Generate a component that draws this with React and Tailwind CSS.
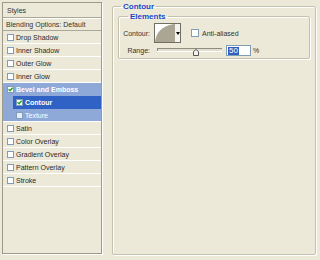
import React from 'react';

const FONT = "font-['Liberation_Sans',Arial,sans-serif]";

function Box({ checked, light }) {
  return (
    <span
      className={`flex h-[7px] w-[7px] shrink-0 items-center justify-center border border-[#7f9db9] ${
        light ? 'bg-[#e8edf8]' : 'bg-white'
      }`}
    >
      {checked && (
        <svg width="5" height="5" viewBox="0 0 5 5">
          <path d="M0.5 2.3 L2 3.8 L4.6 0.8" fill="none" stroke="#21a121" strokeWidth="1.4" />
        </svg>
      )}
    </span>
  );
}

function Row({ label }) {
  return (
    <div className="flex h-[13px] items-center gap-[2px] border-b border-white pl-[4px] text-[#2a2a2a]">
      <Box />
      <span>{label}</span>
    </div>
  );
}

export default function App() {
  const top = ['Drop Shadow', 'Inner Shadow', 'Outer Glow', 'Inner Glow'];
  const bottom = ['Satin', 'Color Overlay', 'Gradient Overlay', 'Pattern Overlay', 'Stroke'];

  return (
    <div className={`flex h-[260px] w-[320px] bg-[#ece9d8] text-[7px] leading-none ${FONT}`}>
      {/* style list */}
      <div className="ml-[2px] mt-[2px] flex h-[252px] w-[100px] flex-col border border-[#9d9a89] shadow-[1px_1px_0_#fff]">
        <div className="flex h-[15px] items-center border-b border-[#aca899] pl-[4px] text-[#333] shadow-[0_1px_0_#fff]">
          Styles
        </div>
        <div className="mt-[1px] flex h-[12px] items-center border-b border-[#aca899] pl-[3px] text-[#333]">
          Blending Options: Default
        </div>
        {top.map((t) => (
          <Row key={t} label={t} />
        ))}
        <div className="bg-[#8ea8d8] font-bold text-white">
          <div className="flex h-[13px] items-center gap-[2px] pl-[4px]">
            <Box checked />
            <span>Bevel and Emboss</span>
          </div>
          <div className="pl-[10px]">
            <div className="flex h-[13px] items-center gap-[2px] bg-[#2f62c4] pl-[3px]">
              <Box checked />
              <span>Contour</span>
            </div>
          </div>
          <div className="flex h-[13px] items-center gap-[2px] border-b border-white pl-[13px] font-normal">
            <Box light />
            <span>Texture</span>
          </div>
        </div>
        {bottom.map((t) => (
          <Row key={t} label={t} />
        ))}
      </div>

      {/* settings */}
      <fieldset className="ml-[10px] mt-[1px] h-[254px] w-[204px] rounded-[2px] border border-[#c4c1ae] px-[5px] pb-0 shadow-[inset_1px_1px_0_#fff,1px_1px_0_#fff]">
        <legend className="ml-[3px] h-[11px] px-[2px] text-[8px] font-bold leading-[11px] text-[#1a46c8]">Contour</legend>
        <fieldset className="h-[47px] rounded-[2px] border border-[#c4c1ae] pl-[1px] shadow-[inset_1px_1px_0_#fff,1px_1px_0_#fff]">
          <legend className="ml-[8px] h-[9px] px-[2px] text-[8px] font-bold leading-[9px] text-[#1a46c8]">Elements</legend>
          <div className="mt-[2px] flex h-[20px] items-center">
            <span className="w-[30px] text-right text-[#333]">Contour:</span>
            <div className="ml-[4px] flex h-[20px] w-[27px] border border-[#716f64] bg-white">
              <svg width="19" height="18" viewBox="0 0 19 18">
                <path d="M0 18 C1 9 6 2 19 0 L19 18 Z" fill="#aaa693" />
              </svg>
              <div className="flex flex-1 items-center justify-center border-l border-[#aca899] bg-[#f4f3ee]">
                <svg width="4" height="3" viewBox="0 0 4 3">
                  <path d="M0 0 H4 L2 3 Z" fill="#000" />
                </svg>
              </div>
            </div>
            <span className="ml-[10px] h-[8px] w-[8px] border border-[#7f9db9] bg-white" />
            <span className="ml-[3px] text-[#333]">Anti-aliased</span>
          </div>
          <div className="mt-[2px] flex h-[11px] items-center">
            <span className="w-[30px] text-right text-[#333]">Range:</span>
            <div className="relative ml-[7px] h-[11px] w-[65px]">
              <div className="mt-[3px] h-[3px] border-t border-l border-[#8f8c7d] bg-[#e2dfd0] shadow-[0_1px_0_#fff]" />
              <svg width="6" height="7" viewBox="0 0 6 7" className="absolute left-[36px] top-[4px]">
                <path d="M0.5 6.5 V2.5 L3 0.5 L5.5 2.5 V6.5 Z" fill="#f4f3ee" stroke="#555" strokeWidth="1" />
              </svg>
            </div>
            <div className="ml-[4px] flex h-[11px] w-[25px] items-center border border-[#7f9db9] bg-white pl-[1px]">
              <span className="bg-[#2f5fc0] px-[1px] text-[8px] text-white">50</span>
            </div>
            <span className="ml-[2px] text-[#333]">%</span>
          </div>
        </fieldset>
      </fieldset>
    </div>
  );
}
